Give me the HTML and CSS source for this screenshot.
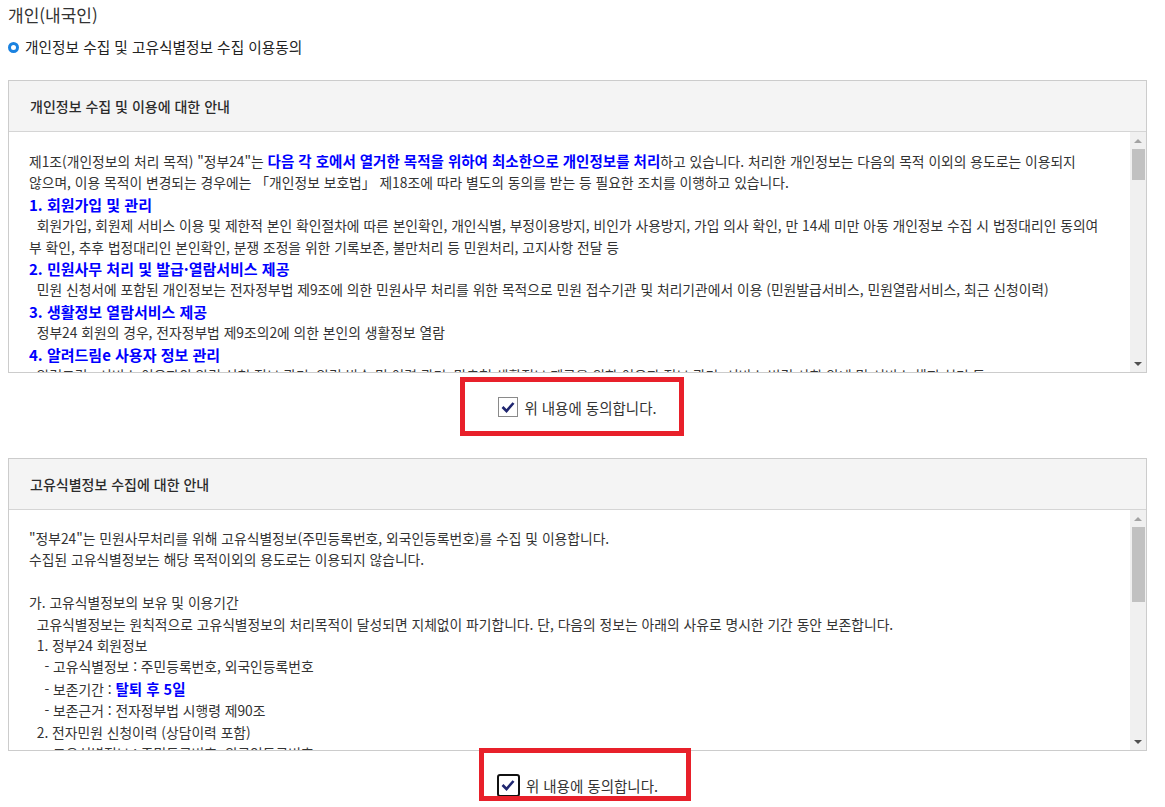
FILE: index.html
```html
<!DOCTYPE html>
<html lang="ko">
<head>
<meta charset="utf-8">
<title>개인(내국인)</title>
<link rel="stylesheet" href="styles.css">
</head>
<body>
<div class="page">
  <h1 class="title">개인(내국인)</h1>
  <h2 class="subtitle"><span class="ring"></span>개인정보 수집 및 고유식별정보 수집 이용동의</h2>

  <section class="box">
    <div class="box-head">개인정보 수집 및 이용에 대한 안내</div>
    <div class="box-body">
      <div class="scroll-content">
        <p class="line">제1조(개인정보의 처리 목적) "정부24"는 <strong class="em">다음 각 호에서 열거한 목적을 위하여 최소한으로 개인정보를 처리</strong>하고 있습니다. 처리한 개인정보는 다음의 목적 이외의 용도로는 이용되지<br>않으며, 이용 목적이 변경되는 경우에는 「개인정보 보호법」 제18조에 따라 별도의 동의를 받는 등 필요한 조치를 이행하고 있습니다.</p>
        <p class="heading">1. 회원가입 및 관리</p>
        <p class="line">&nbsp;&nbsp;회원가입, 회원제 서비스 이용 및 제한적 본인 확인절차에 따른 본인확인, 개인식별, 부정이용방지, 비인가 사용방지, 가입 의사 확인, 만 14세 미만 아동 개인정보 수집 시 법정대리인 동의여<br>부 확인, 추후 법정대리인 본인확인, 분쟁 조정을 위한 기록보존, 불만처리 등 민원처리, 고지사항 전달 등</p>
        <p class="heading">2. 민원사무 처리 및 발급·열람서비스 제공</p>
        <p class="line">&nbsp;&nbsp;민원 신청서에 포함된 개인정보는 전자정부법 제9조에 의한 민원사무 처리를 위한 목적으로 민원 접수기관 및 처리기관에서 이용 (민원발급서비스, 민원열람서비스, 최근 신청이력)</p>
        <p class="heading">3. 생활정보 열람서비스 제공</p>
        <p class="line">&nbsp;&nbsp;정부24 회원의 경우, 전자정부법 제9조의2에 의한 본인의 생활정보 열람</p>
        <p class="heading">4. 알려드림e 사용자 정보 관리</p>
        <p class="line">&nbsp;&nbsp;알려드림e 서비스 이용자의 알림 신청 정보 관리, 알림 발송 및 이력 관리, 맞춤형 생활정보 제공을 위한 이용자 정보 관리, 서비스 변경 사항 안내 및 서비스 해지 처리 등</p>
      </div>
      <div class="scrollbar">
        <span class="arrow up"></span>
        <span class="track"><span class="thumb thumb-a"></span></span>
        <span class="arrow down"></span>
      </div>
    </div>
  </section>

  <div class="agree-row">
    <label class="agree">
      <span class="frame frame-a"></span>
      <span class="check"><svg width="14" height="12" viewBox="0 0 14 12"><polyline points="1.5,6 5.5,10 12.5,2" fill="none" stroke="#1f2670" stroke-width="2.6"/></svg></span>
      <span class="agree-text">위 내용에 동의합니다.</span>
    </label>
  </div>

  <section class="box">
    <div class="box-head">고유식별정보 수집에 대한 안내</div>
    <div class="box-body">
      <div class="scroll-content">
        <p class="line">"정부24"는 민원사무처리를 위해 고유식별정보(주민등록번호, 외국인등록번호)를 수집 및 이용합니다.<br>수집된 고유식별정보는 해당 목적이외의 용도로는 이용되지 않습니다.<br>&nbsp;</p>
        <p class="line">가. 고유식별정보의 보유 및 이용기간<br>&nbsp;&nbsp;고유식별정보는 원칙적으로 고유식별정보의 처리목적이 달성되면 지체없이 파기합니다. 단, 다음의 정보는 아래의 사유로 명시한 기간 동안 보존합니다.<br>&nbsp;&nbsp;1. 정부24 회원정보<br>&nbsp;&nbsp;&nbsp;&nbsp;- 고유식별정보 : 주민등록번호, 외국인등록번호<br>&nbsp;&nbsp;&nbsp;&nbsp;- 보존기간 : <strong class="em">탈퇴 후 5일</strong><br>&nbsp;&nbsp;&nbsp;&nbsp;- 보존근거 : 전자정부법 시행령 제90조<br>&nbsp;&nbsp;2. 전자민원 신청이력 (상담이력 포함)<br>&nbsp;&nbsp;&nbsp;&nbsp;- 고유식별정보 : 주민등록번호, 외국인등록번호</p>
      </div>
      <div class="scrollbar">
        <span class="arrow up"></span>
        <span class="track"><span class="thumb thumb-b"></span></span>
        <span class="arrow down"></span>
      </div>
    </div>
  </section>

  <div class="agree-row">
    <label class="agree">
      <span class="frame frame-b"></span>
      <span class="check focused"><svg width="14" height="12" viewBox="0 0 14 12"><polyline points="1.5,6 5.5,10 12.5,2" fill="none" stroke="#1f2670" stroke-width="2.6"/></svg></span>
      <span class="agree-text">위 내용에 동의합니다.</span>
    </label>
  </div>
</div>
</body>
</html>
```

FILE: styles.css
```css
html, body {
  margin: 0;
  padding: 0;
  background: #fff;
}
body {
  font-family: "Noto Sans CJK KR", "Noto Sans", sans-serif;
  color: #333;
  font-size: 13.8px;
}
.page {
  width: 1139px;
  padding: 0 8px;
}
.title {
  margin: 0;
  padding-top: 3px;
  font-size: 17px;
  font-weight: 400;
  line-height: 24px;
  color: #333;
}
.subtitle {
  margin: 8px 0 0;
  display: flex;
  align-items: center;
  gap: 6px;
  font-size: 14.7px;
  font-weight: 400;
  line-height: 24px;
  color: #222;
}
.ring {
  width: 5px;
  height: 5px;
  border: 3px solid #1a82e0;
  border-radius: 50%;
  box-sizing: content-box;
  flex: none;
}
.box {
  margin-top: 21px;
  border: 1px solid #ccc;
  background: #fff;
}
.agree-row + .box {
  margin-top: 0;
}
.box-head {
  height: 50px;
  display: flex;
  align-items: center;
  padding-left: 21px;
  background: #f4f4f4;
  border-bottom: 1px solid #d5d5d5;
  font-size: 14px;
  font-weight: 500;
  color: #2b2b2b;
}
.box-body {
  display: flex;
  height: 240px;
}
.scroll-content {
  flex: 1;
  overflow: hidden;
  padding: 18px 0 0 20px;
}
.scroll-content p {
  margin: 0;
}
.line {
  line-height: 21.4px;
  white-space: nowrap;
}
.heading {
  font-size: 15px;
  font-weight: 700;
  color: #0000ff;
  line-height: 21.4px;
}
.em {
  color: #0000ff;
  font-weight: 700;
  font-size: 14.5px;
}
.scrollbar {
  width: 16px;
  background: #f0f0f0;
  display: flex;
  flex-direction: column;
  align-items: center;
}
.arrow {
  height: 17px;
  display: flex;
  align-items: center;
  justify-content: center;
  flex: none;
}
.arrow::before {
  content: "";
  border-left: 4px solid transparent;
  border-right: 4px solid transparent;
}
.arrow.up::before {
  border-bottom: 4px solid #a3a3a3;
}
.arrow.down::before {
  border-top: 4px solid #505050;
}
.track {
  flex: 1;
  width: 100%;
  display: flex;
  flex-direction: column;
  align-items: center;
}
.thumb {
  width: 13px;
  background: #c1c1c1;
}
.thumb-a {
  height: 31px;
}
.thumb-b {
  height: 75px;
}
.agree-row {
  display: flex;
  justify-content: center;
  padding: 24px 0 41px;
}
.agree {
  position: relative;
  display: inline-flex;
  align-items: center;
  gap: 6px;
  height: 20px;
  font-size: 14.5px;
  color: #333;
}
.check {
  width: 18px;
  height: 18px;
  border: 1px solid #8a8a8a;
  background: #fff;
  display: flex;
  align-items: center;
  justify-content: center;
  flex: none;
}
.check.focused {
  width: 19px;
  height: 19px;
  border: 2px solid #111;
  border-radius: 3px;
}
.frame {
  position: absolute;
  border: 5px solid #e8202a;
  pointer-events: none;
}
.frame-a {
  left: -38px;
  right: -27px;
  top: -20px;
  bottom: -19px;
}
.frame-b {
  left: -18px;
  right: -33px;
  top: -27px;
  bottom: -6px;
}
```
